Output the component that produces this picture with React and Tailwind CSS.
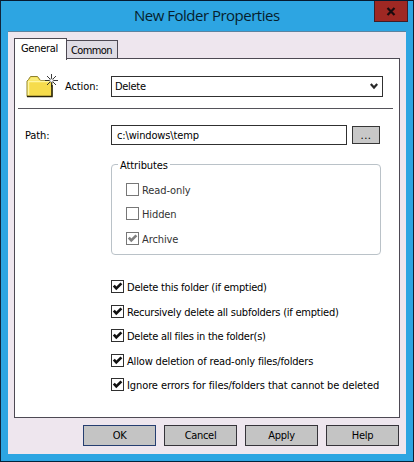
import React from "react";

function Check({ label, checked, muted, className = "", tracking = "" }) {
  return (
    <label className={`flex h-[13px] items-center whitespace-nowrap ${className}`}>
      <span className={`flex h-[13px] w-[13px] shrink-0 border bg-white ${muted ? "border-[#777777]" : "border-[#303030]"}`}>
        {checked && (
          <svg width="11" height="11" viewBox="0 0 11 11">
            <path d="M1.8 4.6 L4.3 7.4 L9.4 2.4" fill="none" stroke={muted ? "#808080" : "#111111"} strokeWidth="2.7" />
          </svg>
        )}
      </span>
      <span className={`ml-[3px] pt-[2px] leading-[13px] ${muted ? "text-[#333333]" : "text-black"} ${tracking}`}>{label}</span>
    </label>
  );
}

function FolderIcon() {
  return (
    <svg width="34" height="26" viewBox="0 0 34 26">
      <path d="M1 22.5 V7 L2.5 5.5 L4.5 2.5 H11.5 L14.5 6.5 H26 V22.5 Z" fill="#f6dc4c" stroke="#8c8130" />
      <path d="M2.5 21 V7.5 H24" fill="none" stroke="#fff6a0" strokeWidth="1.5" />
      <path d="M5 3.5 H11 L13 6.5 H3 Z" fill="#f8ec78" />
      <path d="M1 22.5 H26 V11" fill="none" stroke="#29230a" strokeWidth="1.5" />
      <path d="M25.5 0 V13 M19 6.5 H32 M21 2 L30 11 M30 2 L21 11" stroke="#262626" strokeWidth="0.9" />
      <circle cx="25.5" cy="6.5" r="1.8" fill="#ffffff" stroke="#666666" strokeWidth="0.7" />
    </svg>
  );
}

function DialogButton({ children, primary }) {
  return (
    <button className={`h-[21px] w-[73px] border bg-[#c4c4c4] pt-px leading-[18px] tracking-[-0.3px] ${primary ? "border-[#263e70]" : "border-[#353339]"}`}>
      {children}
    </button>
  );
}

export default function App() {
  return (
    <div className="flex h-[462px] w-[414px] flex-col border border-b-[#03243b] border-l-[#10253b] border-r-[#0b2034] border-t-[#061a30] bg-[#2da5e2] px-[7px] font-['DejaVu_Sans_Condensed','DejaVu_Sans',sans-serif] text-[11px] tracking-[-0.1px] text-black">
      <header className="flex h-[30px] shrink-0">
        <h1 className="ml-[126px] w-[204px] whitespace-nowrap pt-[4px] font-['Open_Sans',sans-serif] text-[15px] leading-[21px] tracking-[-0.5px] text-[#061e2e]">New Folder Properties</h1>
        <button className="ml-[36px] flex h-[21px] w-[34px] -mr-2 shrink-0 items-center justify-center border border-t-0 border-[#401d27] bg-[#9f2823]">
          <svg width="10" height="9" viewBox="0 0 10 9">
            <path d="M1.5 1 L8.5 8 M8.5 1 L1.5 8" stroke="#190b0e" strokeWidth="2.2" />
          </svg>
        </button>
      </header>
      <main className="flex h-[423px] w-[398px] shrink-0 flex-col border-t border-[#5b83a0] bg-[#eee6ee] pl-[6px] pt-[6px]">
        <div className="flex h-[20px] items-end">
          <div className="relative z-10 -mb-[2px] h-[22px] w-[53px] shrink-0 border border-b-0 border-[#4d4953] bg-white pl-[6px] leading-[19px] tracking-[-0.3px]">General</div>
          <div className="h-[18px] w-[51px] border border-b-0 border-l-0 border-[#4d4953] bg-[#dfdce4] pl-[4px] leading-[19px] tracking-[-0.6px]">Common</div>
        </div>
        <section className="h-[360px] w-[386px] border border-[#4d4953] bg-white pl-[3px]">
          <div className="flex h-[50px] w-[375px] border-b border-[#55545a]">
            <div className="ml-[8px] mt-[15px] w-[34px]"><FolderIcon /></div>
            <span className="ml-[5px] w-[46px] pt-[18px] leading-[20px]">Action:</span>
            <div className="mt-[17px] flex h-[21px] w-[272px] items-center justify-between border border-[#303030] pl-[3px] pr-[4px]">
              <span className="pt-[2px] tracking-[-0.3px]">Delete</span>
              <svg width="8" height="7" viewBox="0 0 8 7">
                <path d="M0.8 1 L4 4.5 L7.2 1" fill="none" stroke="#282828" strokeWidth="2.2" />
              </svg>
            </div>
          </div>
          <div className="mt-[16px] flex h-[20px] pl-[7px]">
            <span className="w-[86px] pt-px leading-[20px]">Path:</span>
            <div className="h-[20px] w-[236px] border border-[#303030] pl-[5px] pt-px leading-[18px] tracking-[-0.15px]">c:\windows\temp</div>
            <button className="ml-[5px] mt-px h-[18px] w-[28px] border border-[#363636] bg-[#c8c8c8] leading-[15px] tracking-[0.5px]">...</button>
          </div>
          <fieldset className="ml-[93px] mt-[11px] flex h-[99px] w-[270px] flex-col rounded-[4px] border border-[#bac2c8] pl-[14px]">
            <legend className="-ml-[8px] h-[17px] px-[2px] pt-px leading-[17px]">Attributes</legend>
            <Check label="Read-only" muted className="mt-[10px]" />
            <Check label="Hidden" muted className="mt-[11px]" />
            <Check label="Archive" checked muted className="mt-[12px]" />
          </fieldset>
          <div className="ml-[93px] mt-[25px]">
            <Check label="Delete this folder (if emptied)" checked tracking="tracking-[-0.23px]" />
            <Check label="Recursively delete all subfolders (if emptied)" checked className="mt-[12px]" tracking="tracking-[-0.22px]" />
            <Check label="Delete all files in the folder(s)" checked className="mt-[11px]" tracking="tracking-[-0.25px]" />
            <Check label="Allow deletion of read-only files/folders" checked className="mt-[12px]" tracking="tracking-[-0.17px]" />
            <Check label="Ignore errors for files/folders that cannot be deleted" checked className="mt-[11px]" />
          </div>
        </section>
        <footer className="mt-[7px] flex gap-[8px] pl-[69px]">
          <DialogButton primary>OK</DialogButton>
          <DialogButton>Cancel</DialogButton>
          <DialogButton>Apply</DialogButton>
          <DialogButton>Help</DialogButton>
        </footer>
      </main>
    </div>
  );
}
